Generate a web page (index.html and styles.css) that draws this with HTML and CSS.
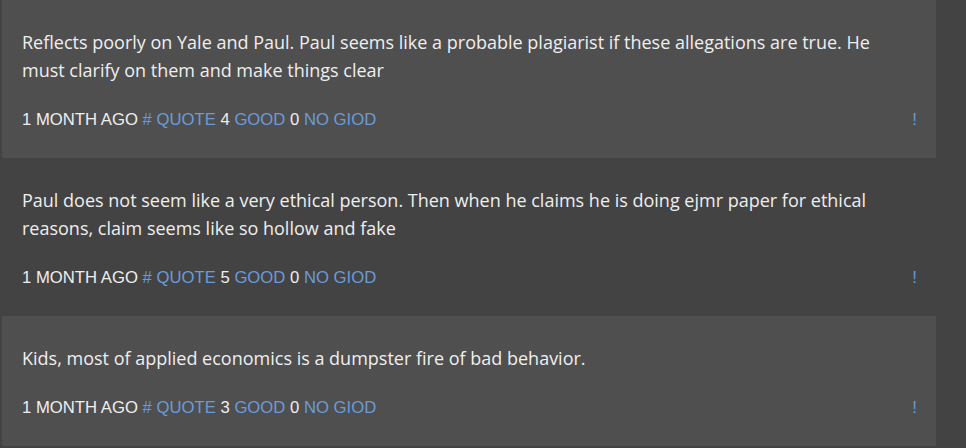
FILE: index.html
```html
<!DOCTYPE html>
<html>
<head>
<meta charset="utf-8">
<link rel="stylesheet" href="styles.css">
</head>
<body>
<div class="thread">
  <div class="post alt">
    <p class="text">Reflects poorly on Yale and Paul. Paul seems like a probable plagiarist if these allegations are true. He must clarify on them and make things clear</p>
    <div class="meta">
      <span class="info">1 MONTH AGO <a class="lnk">#</a> <a class="lnk">QUOTE</a> 4 <a class="lnk">GOOD</a> 0 <a class="lnk">NO GIOD</a></span>
      <a class="lnk">!</a>
    </div>
  </div>
  <div class="post">
    <p class="text">Paul does not seem like a very ethical person. Then when he claims he is doing ejmr paper for ethical reasons, claim seems like so hollow and fake</p>
    <div class="meta">
      <span class="info">1 MONTH AGO <a class="lnk">#</a> <a class="lnk">QUOTE</a> 5 <a class="lnk">GOOD</a> 0 <a class="lnk">NO GIOD</a></span>
      <a class="lnk">!</a>
    </div>
  </div>
  <div class="post alt">
    <p class="text">Kids, most of applied economics is a dumpster fire of bad behavior.</p>
    <div class="meta">
      <span class="info">1 MONTH AGO <a class="lnk">#</a> <a class="lnk">QUOTE</a> 3 <a class="lnk">GOOD</a> 0 <a class="lnk">NO GIOD</a></span>
      <a class="lnk">!</a>
    </div>
  </div>
</div>
</body>
</html>
```
FILE: styles.css
```css
html, body {
  margin: 0;
  padding: 0;
  background: #434343;
}
.thread {
  width: 934px;
  margin-left: 2px;
}
.post {
  padding: 28px 19px 26px 20px;
  color: #eeeeee;
}
.post.alt {
  background: #504f50;
}
.text {
  margin: 0 0 24px 0;
  font-family: "Open Sans", sans-serif;
  font-size: 18px;
  line-height: 28px;
  max-width: 880px;
}
.meta {
  display: flex;
  justify-content: space-between;
  font-family: "Liberation Sans", Arial, sans-serif;
  font-size: 16.7px;
  line-height: 24px;
}
.lnk {
  color: #6a9bd8;
  text-decoration: none;
}
```
